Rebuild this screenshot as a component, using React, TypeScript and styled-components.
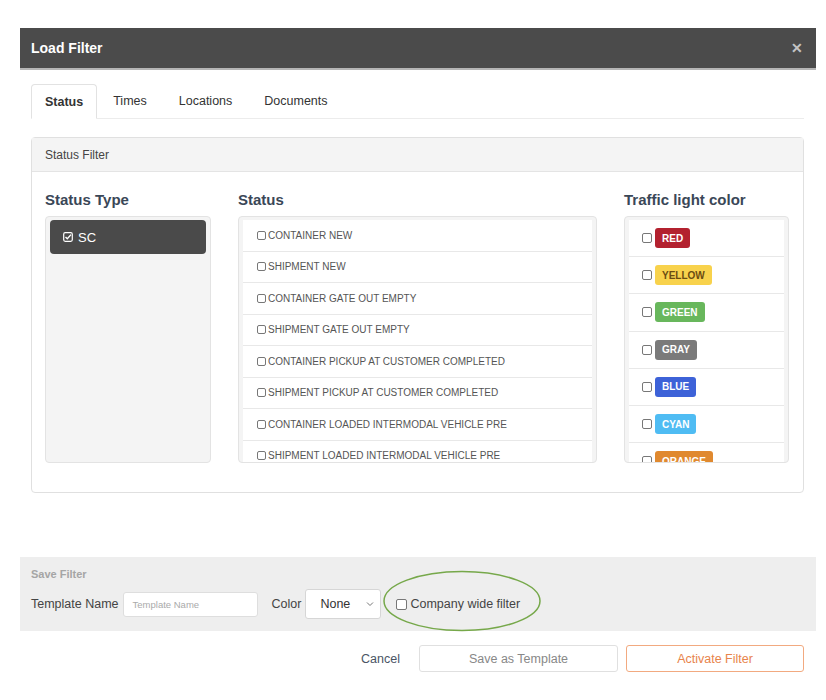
import React from 'react';
import styled, {createGlobalStyle} from 'styled-components';

const GlobalStyle = createGlobalStyle`
    body {
        margin: 0;
        background: #ffffff;
        font-family: "Liberation Sans", Arial, sans-serif;
    }
`;

const Modal = styled.div`
    position: relative;
    width: 796px;
    margin: 28px 0 0 20px;
    background: #fff;
`;

const Header = styled.div`
    height: 40px;
    background: #4b4b4b;
    border-bottom: 2px solid #b5b5b5;
    display: flex;
    align-items: center;
    justify-content: space-between;
    padding: 0 13px 0 11px;
    color: #fff;
    font-weight: bold;
    font-size: 14px;
`;

const Close = styled.span`
    color: #c4c4c4;
    font-size: 14px;
    font-weight: bold;
`;

const Body = styled.div`
    padding: 14px 12px 64px 11px;
`;

const Tabs = styled.div`
    display: flex;
    height: 34px;
    border-bottom: 1px solid #ececec;
`;

const Tab = styled.div<{ $active?: boolean }>`
    display: flex;
    align-items: center;
    padding: 0 ${p => (p.$active ? 13 : 15)}px;
    margin-bottom: ${p => (p.$active ? '-1px' : '0')};
    font-size: 12.5px;
    color: #333;
    font-weight: ${p => (p.$active ? 'bold' : 'normal')};
    border: 1px solid ${p => (p.$active ? '#e2e2e2' : 'transparent')};
    border-bottom-color: ${p => (p.$active ? '#fff' : 'transparent')};
    border-radius: 4px 4px 0 0;
    background: ${p => (p.$active ? '#fff' : 'transparent')};
`;

const Panel = styled.div`
    margin-top: 18px;
    height: 356px;
    box-sizing: border-box;
    border: 1px solid #e0e0e0;
    border-radius: 4px;
`;

const PanelHead = styled.div`
    height: 33px;
    background: #f4f4f4;
    border-bottom: 1px solid #e4e4e4;
    display: flex;
    align-items: center;
    padding-left: 13px;
    font-size: 12px;
    color: #444;
`;

const Columns = styled.div`
    display: grid;
    grid-template-columns: 166px 359px 165px;
    column-gap: 27px;
    padding: 18px 0 0 13px;
`;

const ColTitle = styled.div`
    font-size: 15px;
    font-weight: bold;
    color: #3a4757;
    line-height: 20px;
    margin-bottom: 6px;
`;

const ListBox = styled.div`
    height: 247px;
    box-sizing: border-box;
    border: 1px solid #e3e3e3;
    border-radius: 4px;
    background: #f4f4f4;
    padding: 3px 4px;
    overflow: hidden;
`;

const TypeItem = styled.div`
    height: 34px;
    background: #4a4a4a;
    border-radius: 4px;
    display: flex;
    align-items: center;
    gap: 5px;
    padding-left: 13px;
    color: #fff;
    font-size: 13px;
`;

const StatusRow = styled.div`
    height: 31.5px;
    box-sizing: border-box;
    background: #fff;
    border-bottom: 1px solid #e8e8e8;
    display: flex;
    align-items: center;
    gap: 2px;
    padding-left: 14px;
    font-size: 10px;
    color: #555;
`;

const LightRow = styled.div`
    height: 37.2px;
    box-sizing: border-box;
    background: #fff;
    border-bottom: 1px solid #e8e8e8;
    display: flex;
    align-items: center;
    gap: 3px;
    padding-left: 13px;
`;

const Box = styled.span<{ $size: number }>`
    display: inline-block;
    width: ${p => p.$size}px;
    height: ${p => p.$size}px;
    box-sizing: border-box;
    border: 1px solid #777;
    border-radius: 2px;
    background: #fff;
    flex-shrink: 0;
`;

const Badge = styled.span<{ $bg: string; $fg: string }>`
    height: 20px;
    display: inline-flex;
    align-items: center;
    padding: 0 7px;
    border-radius: 3px;
    background: ${p => p.$bg};
    color: ${p => p.$fg};
    font-size: 10px;
    font-weight: bold;
`;

const SaveSection = styled.div`
    background: #eeeeee;
    height: 74px;
    box-sizing: border-box;
    padding: 10px 11px 0;
`;

const SaveTitle = styled.div`
    font-size: 11px;
    font-weight: bold;
    color: #a5a5a5;
    line-height: 14px;
`;

const SaveRow = styled.div`
    display: flex;
    align-items: center;
    margin-top: 7px;
    height: 32px;
    font-size: 12.5px;
    color: #444;
`;

const TextInput = styled.div`
    width: 135px;
    height: 25px;
    box-sizing: border-box;
    margin: 0 14px 0 4px;
    background: #fff;
    border: 1px solid #dedede;
    border-radius: 3px;
    display: flex;
    align-items: center;
    padding-left: 9px;
    font-size: 9.5px;
    color: #aaa;
`;

const Select = styled.div`
    width: 76px;
    height: 30px;
    box-sizing: border-box;
    margin: 0 15px 0 4px;
    background: #fff;
    border: 1px solid #d6d6d6;
    border-radius: 3px;
    display: flex;
    align-items: center;
    justify-content: space-between;
    padding: 0 6px 0 14px;
    font-size: 12.5px;
    color: #333;
`;

const CheckLabel = styled.div`
    display: flex;
    align-items: center;
    gap: 3px;
`;

const Ellipse = styled.svg`
    position: absolute;
    left: 363px;
    top: 542px;
`;

const Footer = styled.div`
    display: flex;
    justify-content: flex-end;
    align-items: center;
    gap: 8px;
    padding: 14px 12px 0 0;
`;

const Cancel = styled.span`
    font-size: 12.5px;
    color: #4a5565;
    margin-right: 11px;
`;

const Button = styled.div<{ $width: number; $primary?: boolean }>`
    width: ${p => p.$width}px;
    height: 27px;
    box-sizing: border-box;
    border: 1px solid ${p => (p.$primary ? '#f2aa80' : '#e0e0e0')};
    border-radius: 3px;
    display: flex;
    align-items: center;
    justify-content: center;
    font-size: 12.5px;
    color: ${p => (p.$primary ? '#e8844c' : '#888')};
`;

const statuses = [
    'CONTAINER NEW',
    'SHIPMENT NEW',
    'CONTAINER GATE OUT EMPTY',
    'SHIPMENT GATE OUT EMPTY',
    'CONTAINER PICKUP AT CUSTOMER COMPLETED',
    'SHIPMENT PICKUP AT CUSTOMER COMPLETED',
    'CONTAINER LOADED INTERMODAL VEHICLE PRE',
    'SHIPMENT LOADED INTERMODAL VEHICLE PRE',
];

const lights = [
    {name: 'RED', bg: '#b3212f', fg: '#fff'},
    {name: 'YELLOW', bg: '#f8d24c', fg: '#6a4c12'},
    {name: 'GREEN', bg: '#68b75c', fg: '#fff'},
    {name: 'GRAY', bg: '#7a7a7a', fg: '#fff'},
    {name: 'BLUE', bg: '#3d62d8', fg: '#fff'},
    {name: 'CYAN', bg: '#4fbcf3', fg: '#fff'},
    {name: 'ORANGE', bg: '#e0892f', fg: '#fff'},
];

function CheckedIcon() {
    return (
        <svg width="10" height="10" viewBox="0 0 10 10">
            <rect x="0.7" y="0.7" width="8.6" height="8.6" rx="1.5" fill="none" stroke="#fff" strokeWidth="1.2"/>
            <path d="M2.5 5 L4.3 6.8 L8 2.6" fill="none" stroke="#fff" strokeWidth="1.4"/>
        </svg>
    );
}

function App() {
    return (
        <>
            <GlobalStyle/>
            <Modal>
                <Header>
                    <span>Load Filter</span>
                    <Close>✕</Close>
                </Header>
                <Body>
                    <Tabs>
                        <Tab $active>Status</Tab>
                        <Tab>Times</Tab>
                        <Tab>Locations</Tab>
                        <Tab>Documents</Tab>
                    </Tabs>
                    <Panel>
                        <PanelHead>Status Filter</PanelHead>
                        <Columns>
                            <div>
                                <ColTitle>Status Type</ColTitle>
                                <ListBox>
                                    <TypeItem><CheckedIcon/>SC</TypeItem>
                                </ListBox>
                            </div>
                            <div>
                                <ColTitle>Status</ColTitle>
                                <ListBox>
                                    {statuses.map(s => (
                                        <StatusRow key={s}><Box $size={9}/>{s}</StatusRow>
                                    ))}
                                </ListBox>
                            </div>
                            <div>
                                <ColTitle>Traffic light color</ColTitle>
                                <ListBox>
                                    {lights.map(l => (
                                        <LightRow key={l.name}>
                                            <Box $size={10}/>
                                            <Badge $bg={l.bg} $fg={l.fg}>{l.name}</Badge>
                                        </LightRow>
                                    ))}
                                </ListBox>
                            </div>
                        </Columns>
                    </Panel>
                </Body>
                <SaveSection>
                    <SaveTitle>Save Filter</SaveTitle>
                    <SaveRow>
                        <span>Template Name</span>
                        <TextInput>Template Name</TextInput>
                        <span>Color</span>
                        <Select>
                            <span>None</span>
                            <svg width="8" height="6" viewBox="0 0 8 6">
                                <path d="M1 1.5 L4 4.5 L7 1.5" fill="none" stroke="#777" strokeWidth="1"/>
                            </svg>
                        </Select>
                        <CheckLabel><Box $size={11}/>Company wide filter</CheckLabel>
                    </SaveRow>
                </SaveSection>
                <Footer>
                    <Cancel>Cancel</Cancel>
                    <Button $width={199}>Save as Template</Button>
                    <Button $width={178} $primary>Activate Filter</Button>
                </Footer>
                <Ellipse width="160" height="64" viewBox="0 0 160 64">
                    <ellipse cx="79" cy="31" rx="78" ry="29.5" fill="none" stroke="#76a84a" strokeWidth="1.5"/>
                </Ellipse>
            </Modal>
        </>
    );
}

export default App;
